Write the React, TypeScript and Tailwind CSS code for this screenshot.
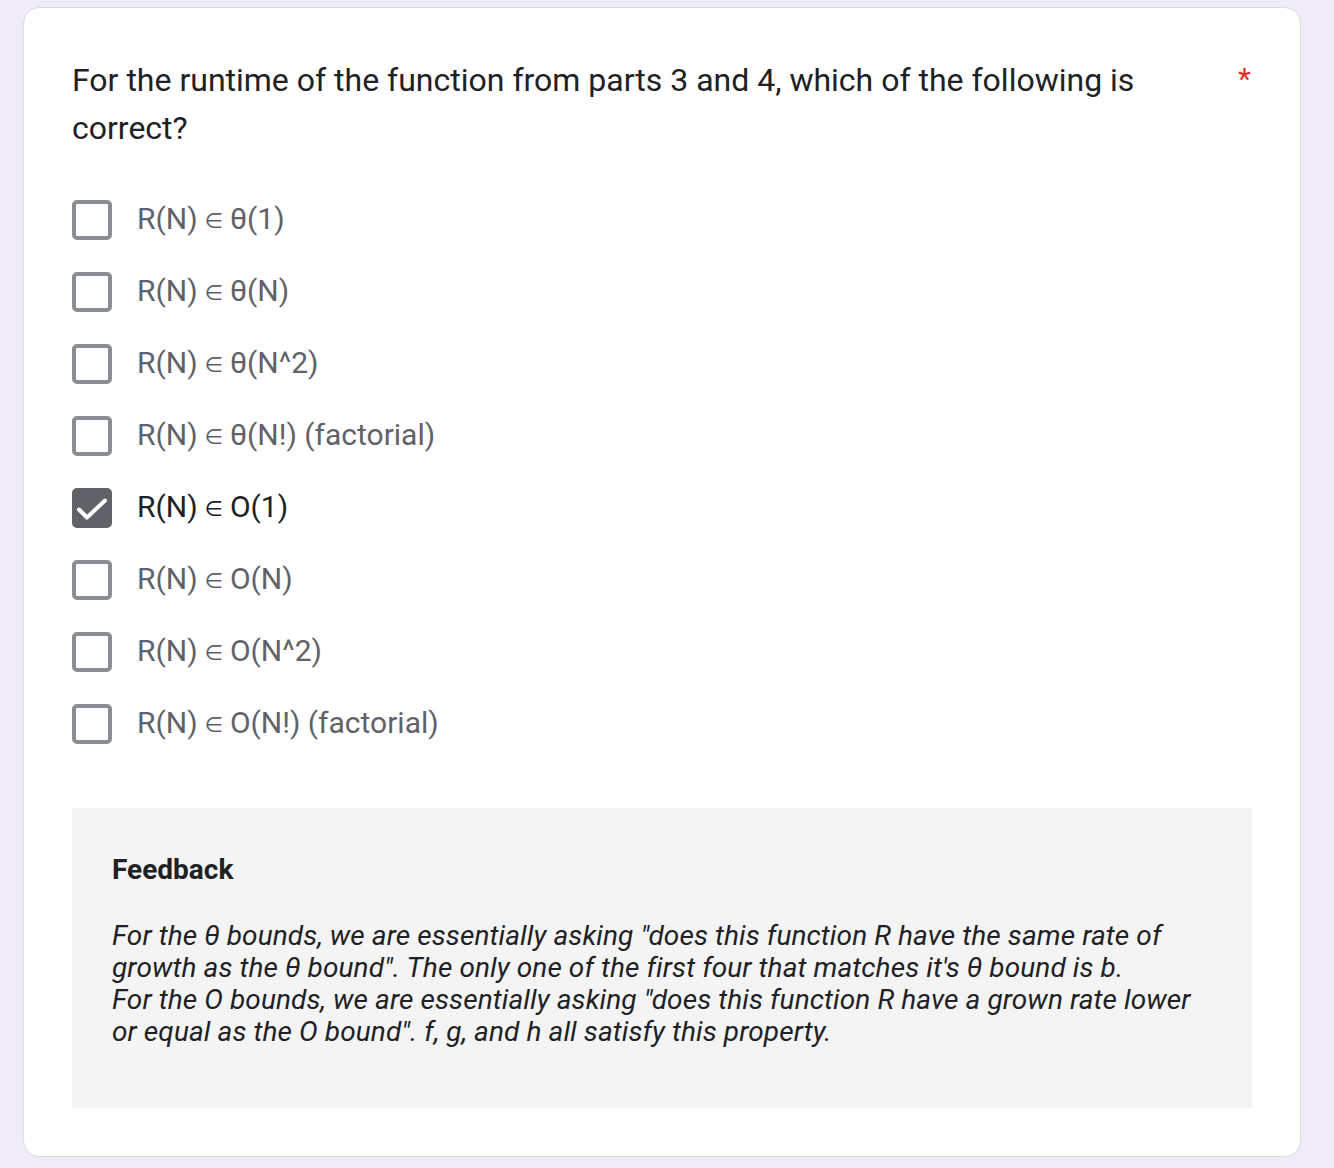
import React from "react";

const options = [
  { pre: "R(N)", post: "θ(1)", checked: false },
  { pre: "R(N)", post: "θ(N)", checked: false },
  { pre: "R(N)", post: "θ(N^2)", checked: false },
  { pre: "R(N)", post: "θ(N!) (factorial)", checked: false },
  { pre: "R(N)", post: "O(1)", checked: true },
  { pre: "R(N)", post: "O(N)", checked: false },
  { pre: "R(N)", post: "O(N^2)", checked: false },
  { pre: "R(N)", post: "O(N!) (factorial)", checked: false },
];

function Box({ checked }: { checked: boolean }) {
  if (checked) {
    return (
      <div className="w-[40px] h-[40px] rounded-[5px] bg-[#5f6368] shrink-0">
        <svg width="40" height="40" viewBox="0 0 40 40" fill="none">
          <path d="M7 21.5L15 29.5L33 12.5" stroke="white" strokeWidth="4" strokeLinecap="round" strokeLinejoin="round" />
        </svg>
      </div>
    );
  }
  return <div className="w-[40px] h-[40px] rounded-[5px] border-[4px] border-[#8a8d91] bg-white shrink-0" />;
}

export default function App() {
  return (
    <div className="min-h-[1168px] bg-[#efebf8] pt-[7px] pl-[23px]" style={{ fontFamily: "Roboto, 'Liberation Sans', sans-serif" }}>
      <div className="w-[1278px] h-[1150px] bg-white border border-[#dadce0] rounded-[16px] pt-[48px] px-[48px] pb-[48px] flex flex-col">
        <div className="flex justify-between">
          <div className="text-[32px] leading-[48px] text-[#202124] w-[1100px]">
            For the runtime of the function from parts 3 and 4, which of the following is correct?
          </div>
          <div className="text-[30px] text-[#d93025] leading-[48px] mr-[1px] -mt-[1px]">*</div>
        </div>
        <div className="mt-[48px] flex flex-col gap-[32px]">
          {options.map((o, i) => (
            <div key={i} className="flex items-center gap-[25px] h-[40px]">
              <Box checked={o.checked} />
              <span className={`text-[30px] leading-[40px] ${o.checked ? "text-[#202124]" : "text-[#5f6368]"}`}>
                {o.pre}
                <span className="text-[21px] mx-[7px] align-[1px]" style={{ fontFamily: "'DejaVu Sans', sans-serif" }}>∈</span>
                {o.post}
              </span>
            </div>
          ))}
        </div>
        <div className="mt-[64px] bg-[#f4f4f4] h-[300px] pl-[40px] pr-[40px] pt-[42px]">
          <div className="text-[28px] leading-[40px] font-bold text-[#202124]">Feedback</div>
          <div className="mt-[30px] text-[28px] leading-[32px] italic text-[#202124] tracking-[0.1px]">
            For the θ bounds, we are essentially asking "does this function R have the same rate of
            <br />
            growth as the θ bound". The only one of the first four that matches it's θ bound is b.
            <br />
            For the O bounds, we are essentially asking "does this function R have a grown rate lower
            <br />
            or equal as the O bound". f, g, and h all satisfy this property.
          </div>
        </div>
      </div>
    </div>
  );
}
